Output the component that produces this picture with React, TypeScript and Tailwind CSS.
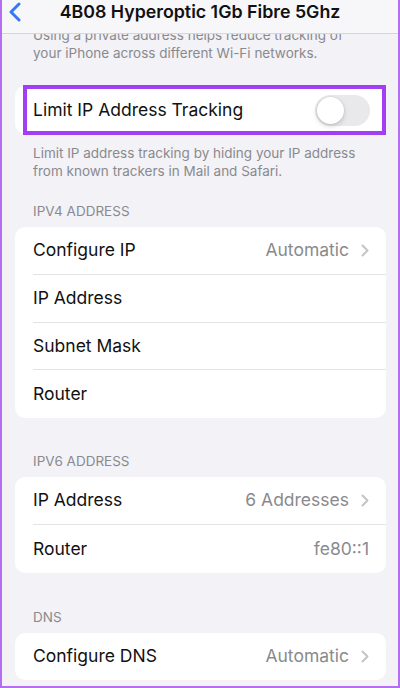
import React from "react";

function Chevron() {
  return (
    <svg width="8" height="13" viewBox="0 0 8 13" fill="none" className="shrink-0">
      <path d="M1.5 1.5L6.5 6.5L1.5 11.5" stroke="#c4c4c7" strokeWidth="2" strokeLinecap="round" strokeLinejoin="round" />
    </svg>
  );
}

function Row({ label, value, chevron, last }: { label: string; value?: string; chevron?: boolean; last?: boolean }) {
  return (
    <div className="flex h-[47.75px] items-center pl-[18px]">
      <div className={"flex h-full flex-1 items-center pr-[17px] " + (last ? "" : "border-b border-[#e3e3e8]")}>
        <span className="flex-1 text-[17.5px] text-[#111]">{label}</span>
        {value && <span className="text-[17.5px] text-[#8a8a8e]">{value}</span>}
        {chevron && <span className="ml-[12px]"><Chevron /></span>}
      </div>
    </div>
  );
}

function SectionHeader({ children }: { children: React.ReactNode }) {
  return <div className="px-[18px] text-[13.5px] uppercase leading-[16px] text-[#8a8a8e]">{children}</div>;
}

export default function App() {
  return (
    <div className="h-[688px] w-[400px] overflow-hidden border-x-2 border-b-2 border-[#b46ef2] bg-[#f2f2f7] font-[Inter,sans-serif]">
      <div className="relative z-10 flex h-[34px] items-start justify-center border-b border-[#d6d6da] bg-[#f7f7f9] pt-[1px]">
        <svg width="14" height="20" viewBox="0 0 14 20" className="absolute left-[6px] top-[2px]" fill="none">
          <path d="M11 2L3 10L11 18" stroke="#3478f6" strokeWidth="3" strokeLinecap="round" strokeLinejoin="round" />
        </svg>
        <span className="text-[17.8px] font-semibold leading-[22px] text-[#111]">4B08 Hyperoptic 1Gb Fibre 5Ghz</span>
      </div>

      <div className="-mt-[8px] pl-[13px] pr-[12px]">
        <p className="px-[18px] text-[13.5px] leading-[18px] text-[#8a8a8e]">
          Using a private address helps reduce tracking of your iPhone across different Wi-Fi networks.
        </p>

        <div className="relative mt-[24px] flex h-[48px] items-center rounded-[10px] bg-white pl-[18px] pr-[16px]">
          <span className="flex-1 text-[17.5px] text-[#111]">Limit IP Address Tracking</span>
          <div className="flex h-[31px] w-[55px] items-center rounded-full bg-[#e9e9eb] p-[2px]">
            <div className="h-[27px] w-[27px] rounded-full bg-white shadow-[0_2px_5px_rgba(0,0,0,0.18),0_0_0_0.5px_rgba(0,0,0,0.06)]" />
          </div>
          <div className="absolute -bottom-[1px] -top-[1px] left-[8px] right-0 border-[4px] border-[#a23ef3]" />
        </div>

        <p className="mt-[10px] px-[18px] text-[13.5px] leading-[18px] text-[#8a8a8e]">
          Limit IP address tracking by hiding your IP address from known trackers in Mail and Safari.
        </p>

        <div className="mt-[23px]">
          <SectionHeader>IPv4 Address</SectionHeader>
          <div className="mt-[8px] overflow-hidden rounded-[10px] bg-white">
            <Row label="Configure IP" value="Automatic" chevron />
            <Row label="IP Address" />
            <Row label="Subnet Mask" />
            <Row label="Router" last />
          </div>
        </div>

        <div className="mt-[35px]">
          <SectionHeader>IPv6 Address</SectionHeader>
          <div className="mt-[8px] overflow-hidden rounded-[10px] bg-white">
            <Row label="IP Address" value="6 Addresses" chevron />
            <Row label="Router" value="fe80::1" last />
          </div>
        </div>

        <div className="mt-[36px]">
          <SectionHeader>DNS</SectionHeader>
          <div className="mt-[8px] overflow-hidden rounded-[10px] bg-white">
            <Row label="Configure DNS" value="Automatic" chevron last />
          </div>
        </div>
      </div>
    </div>
  );
}
